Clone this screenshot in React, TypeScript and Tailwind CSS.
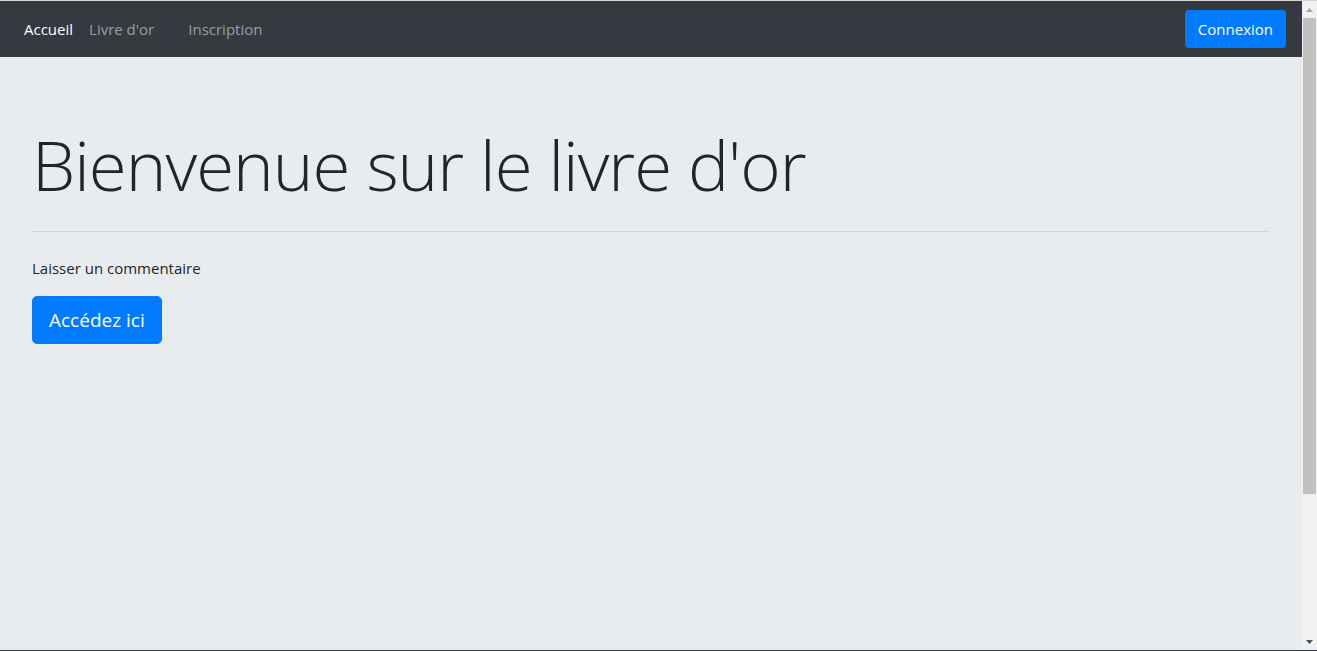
import React from 'react';

const font = { fontFamily: '"Open Sans", "Noto Sans", Arial, sans-serif' };

function Scrollbar() {
  return (
    <div className="w-[15px] flex flex-col bg-[#f1f1f1]">
      <div className="h-[17px] flex items-center justify-center">
        <svg width="7" height="4" viewBox="0 0 7 4"><path d="M3.5 0L7 4H0z" fill="#a3a3a3" /></svg>
      </div>
      <div className="h-[476px] mx-[1px] bg-[#c1c1c1]" />
      <div className="flex-1" />
      <div className="h-[17px] flex items-center justify-center">
        <svg width="7" height="4" viewBox="0 0 7 4"><path d="M0 0H7L3.5 4z" fill="#505050" /></svg>
      </div>
    </div>
  );
}

export default function App() {
  return (
    <div className="h-[651px] flex flex-col border-t border-t-[#d6d6d6] border-b border-b-[#343a40] overflow-hidden" style={font}>
      <div className="flex-1 flex min-h-0">
        <div className="flex-1 flex flex-col bg-[#e9ecef]">
          <nav className="h-[56px] bg-[#343a40] flex items-center justify-between px-4">
            <ul className="flex items-center text-[15px] leading-6">
              <li><a className="block px-2 text-white">Accueil</a></li>
              <li><a className="block px-2 text-white/50">Livre d'or</a></li>
              <li className="ml-[18px]"><a className="block px-2 text-white/50">Inscription</a></li>
            </ul>
            <button className="h-[38px] px-[13px] rounded-[4px] bg-[#007bff] text-white text-[15px] leading-6">Connexion</button>
          </nav>
          <main className="px-8 pt-16 text-[#212529]">
            <h1 className="text-[69px] leading-[86px] tracking-[-1px] font-light mb-6">Bienvenue sur le livre d'or</h1>
            <hr className="border-t border-black/10 mb-6" />
            <p className="text-[15px] leading-6 mb-4">Laisser un commentaire</p>
            <button className="px-4 py-2 border border-[#007bff] rounded-[5px] bg-[#007bff] text-white text-[19px] leading-[30px]">Accédez ici</button>
          </main>
        </div>
        <Scrollbar />
      </div>
    </div>
  );
}
